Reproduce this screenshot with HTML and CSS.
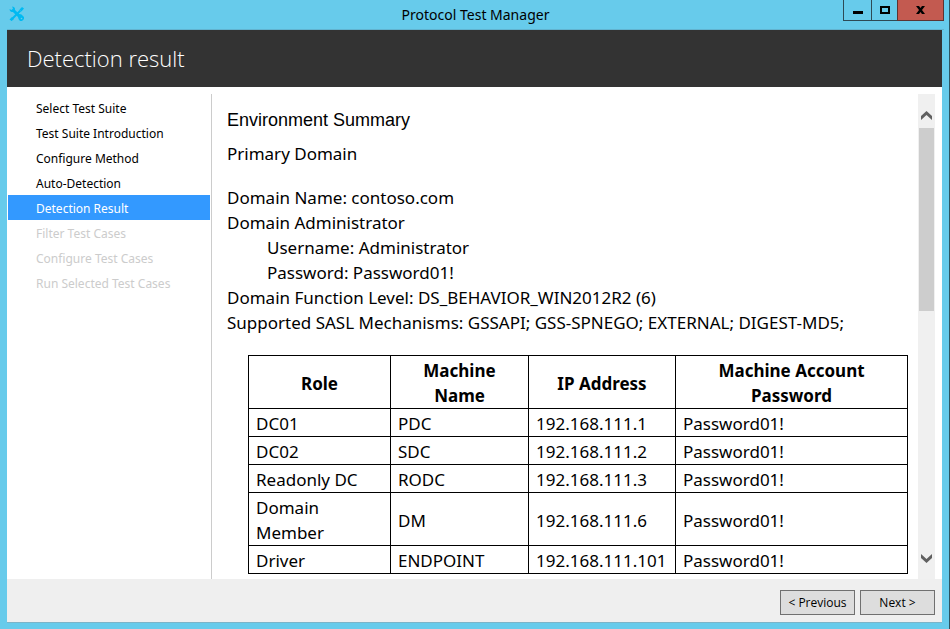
FILE: index.html
```html
<!DOCTYPE html>
<html lang="en">
<head>
<meta charset="utf-8">
<meta name="viewport" content="width=device-width, initial-scale=1">
<title>Protocol Test Manager</title>
<link rel="stylesheet" href="styles.css">
</head>
<body>
<div class="window">
  <header class="titlebar">
    <svg class="app-icon" viewBox="0 0 16 16" aria-hidden="true">
      <path d="M4 4l7.500 7.500" fill="none" stroke="#00baf2" stroke-width="3"/>
      <path d="M11.500 4.500 6.500 9.500 2 14" fill="none" stroke="#00baf2" stroke-width="2"/>
      <path d="M.5 3 1 5l1.500 1h2L6 5V2.500L5 1 3 .5l1 2-1.500 1.500zM9 9.500l1.500-1.500 2 .5L15 11v2l-2 2h-2l-1.500-2z" fill="#00baf2"/>
      <path d="M10.500 3.500 13 1l2 1.500-2.500 3zM.5 13.500 3 11l2 2-2.500 2z" fill="#00baf2"/>
      <circle cx="12.500" cy="12.500" r=".8" fill="#67cbeb"/>
    </svg>
    <span class="caption">Protocol Test Manager</span>
    <div class="window-buttons">
      <button class="win-btn minimize" type="button" aria-label="Minimize"><svg viewBox="0 0 10 8" width="10" height="8" shape-rendering="crispEdges"><path d="M0 5h10v3H0z"/></svg></button>
      <button class="win-btn maximize" type="button" aria-label="Maximize"><svg viewBox="0 0 10 8" width="10" height="8" shape-rendering="crispEdges"><path fill-rule="evenodd" d="M0 0h10v8H0zM2 2v4h6V2z"/></svg></button>
      <button class="win-btn close" type="button" aria-label="Close"><svg viewBox="0 0 9 8" width="9" height="8"><path d="M0 0h3l1.500 2L6 0h3L6 4l3 4H6L4.500 6 3 8H0l3-4z"/></svg></button>
    </div>
  </header>
  <div class="client">
    <div class="banner"><h1>Detection result</h1></div>
    <div class="main">
      <nav class="steps" aria-label="Steps">
        <a class="step" href="#">Select Test Suite</a>
        <a class="step" href="#">Test Suite Introduction</a>
        <a class="step" href="#">Configure Method</a>
        <a class="step" href="#">Auto-Detection</a>
        <a class="step current" href="#" aria-current="step">Detection Result</a>
        <a class="step disabled" aria-disabled="true">Filter Test Cases</a>
        <a class="step disabled" aria-disabled="true">Configure Test Cases</a>
        <a class="step disabled" aria-disabled="true">Run Selected Test Cases</a>
      </nav>
      <main class="result">
        <h2>Environment Summary</h2>
        <p class="section">Primary Domain</p>
        <div class="details">
          <p>Domain Name: contoso.com</p>
          <p>Domain Administrator</p>
          <p class="indent">Username: Administrator</p>
          <p class="indent">Password: Password01!</p>
          <p>Domain Function Level: DS_BEHAVIOR_WIN2012R2 (6)</p>
          <p>Supported SASL Mechanisms: GSSAPI; GSS-SPNEGO; EXTERNAL; DIGEST-MD5;</p>
        </div>
        <table>
          <colgroup><col class="role"><col class="machine"><col class="address"><col class="password"></colgroup>
          <thead>
            <tr><th>Role</th><th>Machine<br>Name</th><th>IP Address</th><th>Machine Account<br>Password</th></tr>
          </thead>
          <tbody>
            <tr><td>DC01</td><td>PDC</td><td>192.168.111.1</td><td>Password01!</td></tr>
            <tr><td>DC02</td><td>SDC</td><td>192.168.111.2</td><td>Password01!</td></tr>
            <tr><td>Readonly DC</td><td>RODC</td><td>192.168.111.3</td><td>Password01!</td></tr>
            <tr><td>Domain<br>Member</td><td>DM</td><td>192.168.111.6</td><td>Password01!</td></tr>
            <tr><td>Driver</td><td>ENDPOINT</td><td>192.168.111.101</td><td>Password01!</td></tr>
          </tbody>
        </table>
      </main>
      <div class="scrollbar">
        <button class="arrow" type="button" aria-label="Scroll up"><svg viewBox="0 0 11 9" width="11" height="9"><path d="M0 5 5.500 0 11 5v4L5.500 4 0 9z"/></svg></button>
        <div class="track"><div class="thumb"></div></div>
        <button class="arrow" type="button" aria-label="Scroll down"><svg viewBox="0 0 11 9" width="11" height="9"><path d="M0 4l5.500 5L11 4V0L5.500 5 0 0z"/></svg></button>
      </div>
    </div>
    <footer class="actions">
      <button class="action" type="button">&lt; Previous</button>
      <button class="action" type="button">Next &gt;</button>
    </footer>
  </div>
</div>
</body>
</html>
```
FILE: styles.css
```css
* { box-sizing: border-box; }
body { margin: 0; font-family: "Noto Sans", "Open Sans", sans-serif; color: #000; }
h1, h2, p { margin: 0; }
button { font-family: inherit; color: #000; cursor: pointer; }

.window {
  display: flex;
  flex-direction: column;
  min-height: 100vh;
  padding: 0 7px 6px;
  background: #67cbeb;
  border-right: 1px solid #2c5563;
}

.titlebar {
  display: grid;
  grid-template-columns: 1fr auto 1fr;
  height: 30px;
  margin-right: -2px;
  border-bottom: 1px solid #62b3cf;
}
.app-icon { width: 16px; height: 16px; margin: 6px 0 0 2px; }
.caption { font-size: 14px; line-height: 30px; }
.window-buttons { display: flex; justify-content: flex-end; }
.win-btn {
  display: flex;
  align-items: center;
  justify-content: center;
  width: 26px;
  height: 21px;
  padding: 0;
  background: #67cbeb;
  border: 1px solid #2d4a55;
  border-top: 0;
  border-right: 0;
}
.minimize { width: 28px; }
.close { width: 47px; background: #c35a50; border: 1px solid #5c3432; border-top: 0; }

.client {
  flex: 1;
  display: flex;
  flex-direction: column;
  background: #fff;
  border-bottom: 1px solid #7bb4c8;
}
.banner { padding: 0 20px; background: #333; color: #fff; }
.banner h1 { font: 300 22px/57px "Open Sans", "Noto Sans", sans-serif; }

.main { flex: 1; display: flex; padding: 7px 7px 0 1px; }
.steps {
  flex: none;
  width: 204px;
  padding: 1px 1px 0 0;
  border-right: 1px solid #ccc;
}
.step {
  display: block;
  padding: 2px 0 0 28px;
  font-size: 12px;
  line-height: 23px;
  color: #000;
  text-decoration: none;
}
.step.current { background: #39f; color: #fff; }
.step.disabled { color: #ccc; }

.result { flex: 1; padding: 14px 10px 5px 15px; font-size: 17px; line-height: 25px; }
.result h2 { font: 18px/24px "Liberation Sans", Arial, sans-serif; }
.section { margin-top: 9px; }
.details { margin-top: 19px; }
.indent { padding-left: 40px; }

table { width: calc(100% - 21px); margin: 20px 0 0 21px; border-collapse: collapse; table-layout: fixed; }
th, td { padding: 2px 7px 0; border: 1px solid #000; text-align: left; }
th { text-align: center; font-weight: 700; }
.role { width: 142px; }
.machine { width: 138px; }
.address { width: 147px; }

.scrollbar { flex: none; display: flex; flex-direction: column; width: 17px; background: #f0f0f0; }
.arrow { height: 34px; padding: 8px 0 0; border: 0; background: none; fill: #606060; }
.arrow:last-child { padding: 0 0 8px; }
.track { flex: 1; padding: 0 1px; }
.thumb { height: 183px; background: #cdcdcd; }

.actions { display: flex; justify-content: flex-end; gap: 5px; padding: 11px 7px 7px; background: #efefef; }
.action {
  width: 75px;
  height: 25px;
  padding: 0;
  font: 12px "Open Sans", "Noto Sans", sans-serif;
  background: #ddd;
  border: 1px solid #707070;
}
```
